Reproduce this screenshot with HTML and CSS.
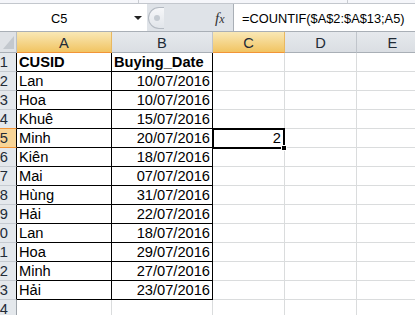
FILE: index.html
```html
<!DOCTYPE html>
<html>
<head>
<meta charset="utf-8">
<link rel="stylesheet" href="styles.css">
</head>
<body>
<div class="ribbon-edge"><div class="rseg1"></div><div class="rseg2"></div></div>
<div class="fbar">
  <div class="namebox"><span class="namebox-text">C5</span><span class="dropdown"></span></div>
  <div class="controls">
    <div class="notch"><span class="dot"></span></div>
    <div class="fx"><i>f</i><i class="x">x</i></div>
  </div>
  <div class="formula">=COUNTIF($A$2:$A$13;A5)</div>
</div>
<div class="sheet">
  <div class="corner"><svg width="16" height="20" viewBox="0 0 16 20"><polygon points="14,4 14,17 3,17" fill="#c3c8ce"/></svg></div>
  <div class="ch sel">A</div>
  <div class="ch">B</div>
  <div class="ch sel">C</div>
  <div class="ch">D</div>
  <div class="ch">E</div>

  <div class="rh tb">1</div><div class="c t b">CUSID</div><div class="c t b">Buying_Date</div><div class="c"></div><div class="c"></div><div class="c"></div>
  <div class="rh tb">2</div><div class="c t">Lan</div><div class="c t num">10/07/2016</div><div class="c"></div><div class="c"></div><div class="c"></div>
  <div class="rh tb">3</div><div class="c t">Hoa</div><div class="c t num">10/07/2016</div><div class="c"></div><div class="c"></div><div class="c"></div>
  <div class="rh tb pre">4</div><div class="c t">Khuê</div><div class="c t num">15/07/2016</div><div class="c"></div><div class="c"></div><div class="c"></div>
  <div class="rh tb sel">5</div><div class="c t">Minh</div><div class="c t num">20/07/2016</div><div class="c num active">2<span class="selbox"></span><span class="handle"></span></div><div class="c"></div><div class="c"></div>
  <div class="rh tb">6</div><div class="c t">Kiên</div><div class="c t num">18/07/2016</div><div class="c"></div><div class="c"></div><div class="c"></div>
  <div class="rh tb">7</div><div class="c t">Mai</div><div class="c t num">07/07/2016</div><div class="c"></div><div class="c"></div><div class="c"></div>
  <div class="rh tb">8</div><div class="c t">Hùng</div><div class="c t num">31/07/2016</div><div class="c"></div><div class="c"></div><div class="c"></div>
  <div class="rh tb">9</div><div class="c t">Hải</div><div class="c t num">22/07/2016</div><div class="c"></div><div class="c"></div><div class="c"></div>
  <div class="rh tb">10</div><div class="c t">Lan</div><div class="c t num">18/07/2016</div><div class="c"></div><div class="c"></div><div class="c"></div>
  <div class="rh tb">11</div><div class="c t">Hoa</div><div class="c t num">29/07/2016</div><div class="c"></div><div class="c"></div><div class="c"></div>
  <div class="rh tb">12</div><div class="c t">Minh</div><div class="c t num">27/07/2016</div><div class="c"></div><div class="c"></div><div class="c"></div>
  <div class="rh tb">13</div><div class="c t">Hải</div><div class="c t num">23/07/2016</div><div class="c"></div><div class="c"></div><div class="c"></div>
  <div class="rh">14</div><div class="c"></div><div class="c"></div><div class="c"></div><div class="c"></div><div class="c"></div>
</div>
</body>
</html>
```
FILE: styles.css
```css
* { box-sizing: border-box; margin: 0; padding: 0; }
html, body { width: 415px; height: 315px; overflow: hidden; background: #fff; }
body { font-family: "Liberation Sans", Arial, sans-serif; font-size: 14.667px; color: #000; }

.ribbon-edge { height: 4px; display: flex; background: #f5f6fa; border-bottom: 1px solid #c3c7cd; }
.rseg1 { width: 139px; flex-shrink: 0; border-right: 1px solid #c9ccd1; }
.rseg2 { width: 209px; flex-shrink: 0; border-right: 1px solid #c9ccd1; }

.fbar { height: 28px; display: flex; background: #dfe3e8; border-bottom: 1px solid #a9afb6; font-size: 12.8px; }
.namebox { width: 147px; flex-shrink: 0; background: #fff; display: flex; align-items: center; padding-top: 2px; }
.namebox-text { flex: 1; padding-left: 51px; line-height: 17px; }
.dropdown { width: 0; height: 0; border-left: 4px solid transparent; border-right: 4px solid transparent; border-top: 4px solid #222; margin-right: 5px; margin-top: -2px; }
.controls { width: 86px; flex-shrink: 0; display: flex; align-items: center; }
.notch { width: 16px; height: 22px; flex-shrink: 0; margin-left: 1px; margin-top: 1px; border: 1px solid #b4bac2; border-right: none; border-radius: 11px 0 0 11px; background: linear-gradient(#f6f7f9, #e1e5ea); display: flex; align-items: center; padding-left: 5px; }
.dot { width: 6px; height: 6px; border-radius: 50%; background: #c5cbd2; }
.fx { margin-left: 51px; font-family: "Liberation Serif", "Times New Roman", serif; color: #333; font-size: 15px; padding-top: 1px; }
.fx .x { font-size: 12px; }
.formula { flex: 1; min-width: 0; overflow: hidden; white-space: nowrap; background: #fff; border-left: 1px solid #a9afb6; padding-left: 8px; line-height: 17px; display: flex; align-items: center; padding-top: 2px; }

.sheet { display: grid; grid-template-columns: 17px 95px 101px 72px 72px 72px; grid-template-rows: 21px; grid-auto-rows: 19px; width: 429px; }
.corner { background: #dfe2e6; border-right: 1px solid #b9bec4; border-bottom: 1px solid #a9afb6; }
.corner svg { display: block; }
.ch { background: linear-gradient(#e6e9ed, #dadee3); border-right: 1px solid #c0c5cb; border-bottom: 1px solid #a9afb6; text-align: center; line-height: 20px; padding-top: 1px; color: #222b36; }
.ch.sel { background: linear-gradient(#f9e8b6, #f1c462); border-bottom-color: #f29436; border-right-color: #e9b860; }

.rh { background: #e4e8ec; border-right: 1px solid #9ea4aa; border-bottom: 1px solid #c6cbd1; display: flex; justify-content: flex-end; padding-right: 8px; line-height: 18px; overflow: hidden; color: #222b36; white-space: nowrap; }
.rh.tb { border-right-color: #000; }
.rh.pre { border-bottom-color: #f29436; }
.rh.sel { background: #f8d596; border-bottom-color: #f29436; }

.c { border-right: 1px solid #dadcdd; border-bottom: 1px solid #dadcdd; padding: 0 2px; line-height: 18px; white-space: nowrap; }
.c.t { border-right-color: #000; border-bottom-color: #000; }
.c.b { font-weight: bold; }
.c.num { text-align: right; }
.active { padding-right: 3px; position: relative; z-index: 2; }
.selbox { position: absolute; top: -1px; left: -1px; right: -1px; bottom: -2px; border: 2px solid #000; }
.handle { position: absolute; right: -3px; bottom: -4px; width: 6px; height: 6px; background: #000; border: 1px solid #fff; }
```
